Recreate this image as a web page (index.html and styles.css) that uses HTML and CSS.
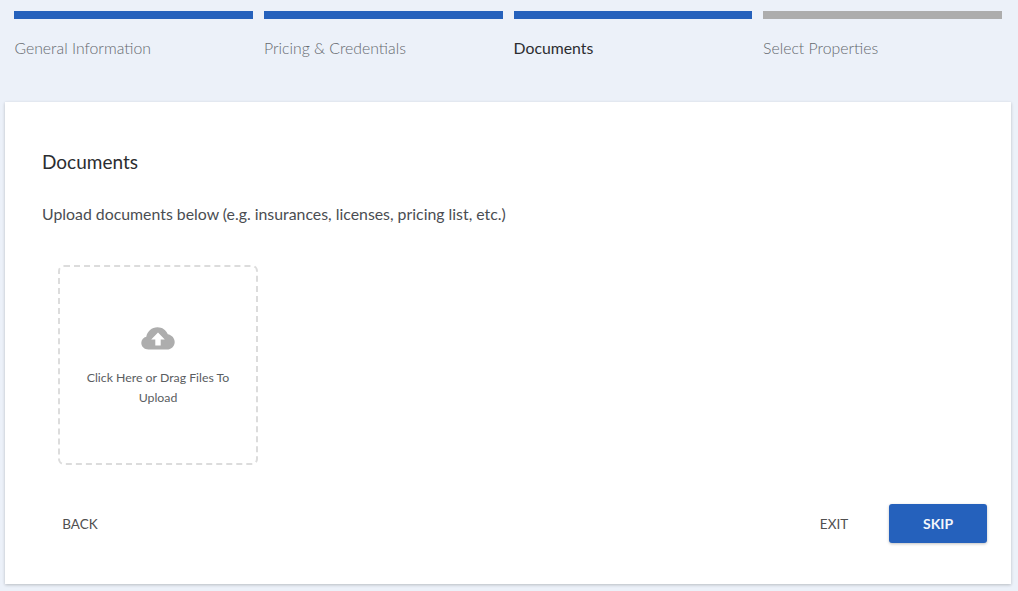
FILE: index.html
```html
<!DOCTYPE html>
<html lang="en">
<head>
<meta charset="utf-8">
<title>Documents</title>
<link rel="stylesheet" href="styles.css">
</head>
<body>
<nav class="steps">
  <div class="step done"><div class="bar"></div><div class="label">General Information</div></div>
  <div class="step done"><div class="bar"></div><div class="label">Pricing &amp; Credentials</div></div>
  <div class="step current"><div class="bar"></div><div class="label">Documents</div></div>
  <div class="step"><div class="bar"></div><div class="label">Select Properties</div></div>
</nav>
<main class="card">
  <h1 class="title">Documents</h1>
  <p class="intro">Upload documents below (e.g. insurances, licenses, pricing list, etc.)</p>
  <div class="dropzone">
    <svg class="cloud" viewBox="0 0 34 24" width="34" height="24" aria-hidden="true">
      <path fill="#adadad" d="M7.5 23.5C3.4 23.5 0.3 20.6 0.3 17c0-3 2.100-5.500 5-6.200C6.200 5.300 10.800 1.200 16.500 1.200c4.700 0 8.700 2.800 10.300 7 3.700.6 6.900 3.800 6.900 7.700 0 4.300-3.500 7.600-7.800 7.600z"/>
      <path fill="#fff" d="M17 6.500l6.800 7h-4.100v6h-5.400v-6h-4.100z"/>
    </svg>
    <div class="drop-text">Click Here or Drag Files To Upload</div>
  </div>
  <div class="actions">
    <button class="btn text" type="button">BACK</button>
    <div class="right">
      <button class="btn text" type="button">EXIT</button>
      <button class="btn primary" type="button">SKIP</button>
    </div>
  </div>
</main>
</body>
</html>
```
FILE: styles.css
```css
* { box-sizing: border-box; }
html, body { margin: 0; height: 100%; }
body {
  background: #ecf1f9;
  font-family: "Lato", "Liberation Sans", sans-serif;
  color: #333;
  padding: 11px 7px 7px 5px;
  overflow: hidden;
}
.steps {
  display: grid;
  grid-template-columns: repeat(4, 1fr);
  column-gap: 10.67px;
  margin: 0 9px 0 9.4px;
  height: 91px;
}
.bar { height: 8px; background: #2561bc; }
.step:last-child .bar { background: #adadad; }
.label {
  margin-top: 19px;
  font-size: 15.8px;
  line-height: 20px;
  font-weight: 300;
  color: #65696f;
}
.current .label { color: #2b2d30; font-weight: 400; }
.card {
  background: #fff;
  height: 482px;
  padding: 48px 24px 0 37px;
  box-shadow: 0 1px 3px rgba(0,0,0,.22);
}
.title {
  margin: 0;
  font-size: 19px;
  line-height: 24px;
  font-weight: 400;
  color: #2b2d30;
}
.intro {
  margin: 30px 0 0;
  font-size: 15.85px;
  line-height: 20px;
  color: #4a4d52;
}
.dropzone {
  width: 200px;
  height: 200px;
  margin: 41px 0 0 16px;
  border: 2px dashed #dcdcdc;
  border-radius: 6px;
  padding: 59px 16px 0;
  display: flex;
  flex-direction: column;
  align-items: center;
}
.cloud { display: block; }
.drop-text {
  margin-top: 18px;
  font-size: 12.3px;
  line-height: 20px;
  text-align: center;
  color: #5a5d61;
}
.actions {
  display: flex;
  justify-content: space-between;
  align-items: flex-start;
  margin-top: 39px;
  height: 39px;
}
.right { display: flex; align-items: flex-start; gap: 17px; }
.btn {
  font-family: inherit;
  font-size: 13.5px;
  border: 0;
  background: none;
  cursor: pointer;
  padding: 0;
}
.text { width: 76px; height: 39px; color: #505050; }
.primary {
  width: 98px;
  height: 39px;
  background: #2561bc;
  color: #f3f6fb;
  font-size: 14px;
  font-weight: 700;
  border-radius: 3px;
  box-shadow: 0 1px 3px rgba(0,0,0,.25);
}
```
